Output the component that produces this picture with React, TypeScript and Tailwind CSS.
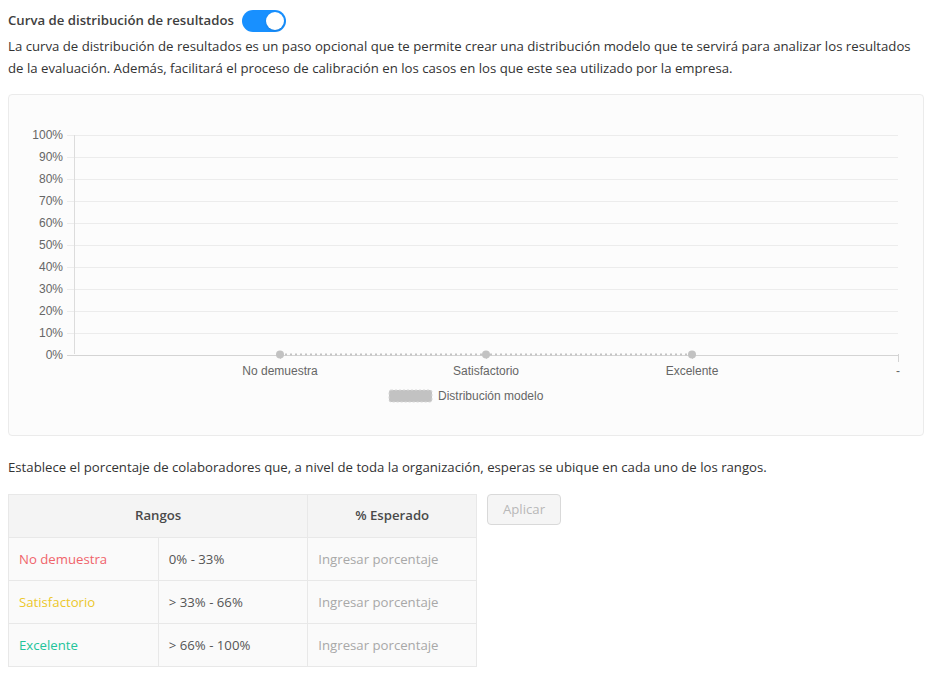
import React from "react";

const font = { fontFamily: '"Open Sans", "Noto Sans", sans-serif' };

function Chart() {
  const ys = [100, 90, 80, 70, 60, 50, 40, 30, 20, 10, 0];
  const pts = [
    { x: 271, label: "No demuestra" },
    { x: 477, label: "Satisfactorio" },
    { x: 683, label: "Excelente" },
  ];
  return (
    <svg width="915" height="341" viewBox="0 0 915 341" style={{ fontFamily: '"Liberation Sans", Arial, sans-serif' }}>
      {ys.map((v, i) => {
        const y = 40 + i * 22;
        return (
          <g key={v}>
            <line x1={58} x2={889} y1={y + 0.5} y2={y + 0.5} stroke={v === 0 ? "#d4d4d4" : "#ececec"} strokeWidth={1} />
            <text x={54} y={y + 4} textAnchor="end" fontSize={12} fill="#666">
              {v}%
            </text>
          </g>
        );
      })}
      <line x1={65.5} x2={65.5} y1={40} y2={259} stroke="#dcdcdc" />
      <line x1={889.5} x2={889.5} y1={259} y2={267} stroke="#d4d4d4" />
      {pts.map((p) => (
        <line key={p.x} x1={p.x + 0.5} x2={p.x + 0.5} y1={259} y2={264} stroke="#d4d4d4" />
      ))}
      <line x1={271} x2={683} y1={259.5} y2={259.5} stroke="#c4c4c4" strokeWidth={2} strokeDasharray="2 3" />
      {pts.map((p) => (
        <circle key={"c" + p.x} cx={p.x} cy={259.5} r={4} fill="#c2c2c2" />
      ))}
      {pts.map((p) => (
        <text key={"t" + p.x} x={p.x} y={280} textAnchor="middle" fontSize={12} fill="#666">
          {p.label}
        </text>
      ))}
      <text x={889} y={280} textAnchor="middle" fontSize={12} fill="#666">
        -
      </text>
      <rect x={380} y={295} width={43} height={12} rx={2} fill="#c2c2c2" stroke="#d8d8d8" strokeDasharray="2 2" />
      <text x={429} y={305} fontSize={12} fill="#666">
        Distribución modelo
      </text>
    </svg>
  );
}

export default function App() {
  const rows = [
    { name: "No demuestra", color: "text-[#f0646b]", range: "0% - 33%" },
    { name: "Satisfactorio", color: "text-[#ecc72a]", range: "> 33% - 66%" },
    { name: "Excelente", color: "text-[#22c49a]", range: "> 66% - 100%" },
  ];
  return (
    <div className="w-[932px] h-[675px] bg-white text-[#333] text-[13.2px] overflow-hidden" style={font}>
      <div className="px-2 pt-[10px]">
        <div className="flex items-center gap-[8px] h-[22px]">
          <span className="font-semibold text-[#404040]">Curva de distribución de resultados</span>
          <div className="relative w-[44px] h-[22px] rounded-full bg-[#1890ff]">
            <div className="absolute right-[2px] top-[2px] w-[18px] h-[18px] rounded-full bg-white shadow" />
          </div>
        </div>
        <p className="leading-[22px] mt-[3px]">
          La curva de distribución de resultados es un paso opcional que te permite crear una distribución modelo que te servirá para analizar los resultados de la evaluación. Además, facilitará el proceso de calibración en los casos en los que este sea utilizado por la empresa.
        </p>
        <div className="mt-[15px] w-[916px] h-[342px] border border-[#ebebeb] rounded bg-[#fcfcfc]">
          <Chart />
        </div>
        <p className="mt-[20px] leading-[22px]">
          Establece el porcentaje de colaboradores que, a nivel de toda la organización, esperas se ubique en cada uno de los rangos.
        </p>
        <div className="flex items-start gap-[10px] mt-[16px]">
          <table className="border-collapse w-[469px]">
            <thead>
              <tr className="h-[43px] bg-[#f4f4f4]">
                <th colSpan={2} className="border border-[#e8e8e8] font-semibold text-[#4a4a4a] text-center">
                  Rangos
                </th>
                <th className="border border-[#e8e8e8] font-semibold text-[#4a4a4a] text-center w-[169px]">% Esperado</th>
              </tr>
            </thead>
            <tbody>
              {rows.map((r) => (
                <tr key={r.name} className="h-[43px] bg-[#fafafa]">
                  <td className={`border border-[#e8e8e8] px-[10px] pt-[1px] w-[150px] ${r.color}`}>{r.name}</td>
                  <td className="border border-[#e8e8e8] px-[10px] pt-[1px] w-[150px] text-[#555]">{r.range}</td>
                  <td className="border border-[#e8e8e8] px-[10px] pt-[1px] text-[#a8a8a8]">Ingresar porcentaje</td>
                </tr>
              ))}
            </tbody>
          </table>
          <button className="w-[74px] h-[31px] rounded border border-[#d9d9d9] bg-[#f5f5f5] text-[#b8b8b8]">
            Aplicar
          </button>
        </div>
      </div>
    </div>
  );
}
